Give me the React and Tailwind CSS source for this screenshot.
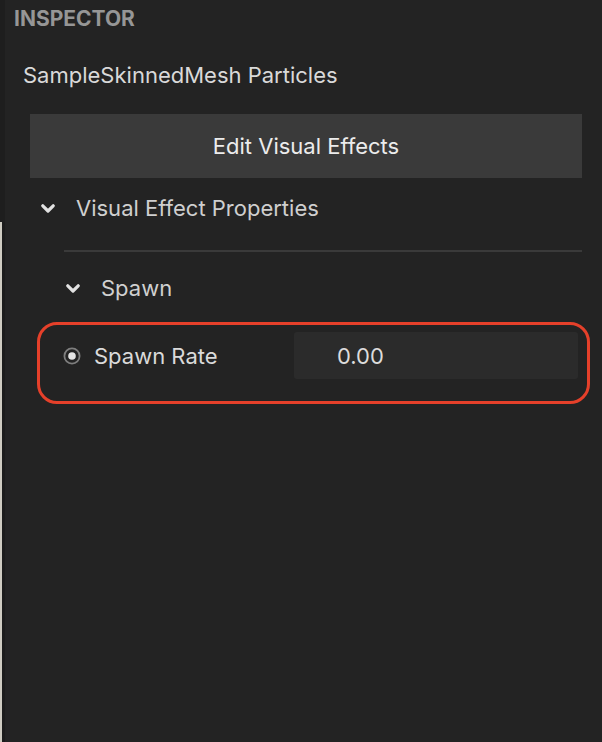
import { useState } from 'react';

// Chevron used by the collapsible sections
function Chevron({ className = '' }) {
  return (
    <svg viewBox="0 0 14 9" className={className} fill="none">
      <path d="M1.8 1.8 L7 7 L12.2 1.8" stroke="currentColor" strokeWidth="3.2" strokeLinecap="round" strokeLinejoin="round" />
    </svg>
  );
}

function Radio() {
  return (
    <svg viewBox="0 0 18 18" className="w-[18px] h-[18px] shrink-0">
      <circle cx="9" cy="9" r="7.6" fill="none" stroke="#7e7e7e" strokeWidth="1.8" />
      <circle cx="9" cy="9" r="3.8" fill="#e4e4e4" />
    </svg>
  );
}

export default function App() {
  const [spawnRate, setSpawnRate] = useState('0.00');

  return (
    <div
      className="w-[602px] h-[742px] bg-[#232323] flex overflow-hidden"
      style={{ fontFamily: 'Inter, "Noto Sans", sans-serif' }}
    >
      {/* left gutter */}
      <div className="w-[5px] flex flex-col shrink-0">
        <div className="h-[222px] bg-[#1e1e1e]" />
        <div className="flex-1 flex">
          <div className="w-[2px] bg-[#cfccc2]" />
          <div className="w-[3px] bg-[#1c1c1c]" />
        </div>
      </div>

      <div className="flex-1 flex flex-col">
        <div className="pl-[9px] pt-[7px] text-[21px] font-bold text-[#969696] leading-[24px]">
          INSPECTOR
        </div>

        <div className="pl-[18px] mt-[32px] text-[22px] text-[#d9d9d9] leading-[24px]">
          SampleSkinnedMesh Particles
        </div>

        <div className="pl-[25px] pr-[20px] mt-[27px]">
          <button className="w-full h-[64px] bg-[#3a3a3a] text-[#ececec] text-[22px] font-normal leading-[24px]">
            Edit Visual Effects
          </button>
        </div>

        <div className="flex items-center pl-[36px] mt-[18px] h-[24px]">
          <Chevron className="w-[14px] h-[9px] text-[#e2e2e2]" />
          <span className="ml-[21px] text-[22px] text-[#cfcfcf] leading-[24px]">Visual Effect Properties</span>
        </div>

        <div className="ml-[59px] mr-[20px] mt-[30px] h-[2px] bg-[#3a3a3a]" />

        <div className="flex items-center pl-[61px] mt-[24px] h-[24px]">
          <Chevron className="w-[14px] h-[9px] text-[#e2e2e2]" />
          <span className="ml-[21px] text-[22px] text-[#d0d0d0] leading-[24px]">Spawn</span>
        </div>

        <div className="ml-[32px] mr-[12px] mt-[22px] h-[82px] border-[3px] border-[#e5402a] rounded-[20px] flex items-start pt-[7px] pl-[23px] pr-[9px]">
          <div className="h-[47px] flex items-center">
            <Radio />
            <span className="ml-[13px] text-[22px] text-[#dadada] leading-[24px]">Spawn Rate</span>
          </div>
          <input
            value={spawnRate}
            onChange={e => setSpawnRate(e.target.value)}
            className="ml-auto w-[284px] h-[47px] bg-[#2b2b2b] rounded-[3px] pl-[43px] text-[22px] text-[#dcdcdc] outline-none"
          />
        </div>
      </div>
    </div>
  );
}
